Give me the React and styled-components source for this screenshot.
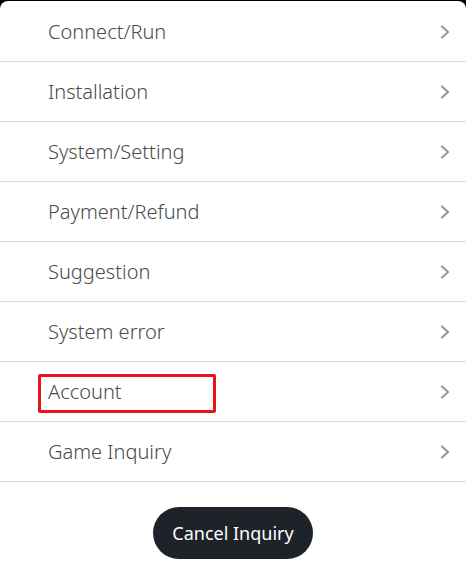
import React from 'react';
import styled, { createGlobalStyle } from 'styled-components';

const GlobalStyle = createGlobalStyle`
  html, body {
    margin: 0;
    padding: 0;
    background: #000;
  }
  body {
    font-family: "Noto Sans", "Open Sans", sans-serif;
  }
`;

const topics = [
  'Connect/Run',
  'Installation',
  'System/Setting',
  'Payment/Refund',
  'Suggestion',
  'System error',
  'Account',
  'Game Inquiry',
];

function Chevron() {
  return (
    <svg width="12" height="14" viewBox="0 0 12 14" fill="none">
      <path d="M3 1.5 L9 7 L3 12.5" stroke="#9a9a9a" strokeWidth="2.2" strokeLinecap="round" strokeLinejoin="round" />
    </svg>
  );
}

export default function App() {
  return (
    <>
      <GlobalStyle />
      <Sheet>
        <List>
          {topics.map((t) => (
            <Row key={t}>
              <Label>{t}</Label>
              {t === 'Account' && <Highlight />}
              <Chevron />
            </Row>
          ))}
        </List>
        <Footer>
          <CancelButton>Cancel Inquiry</CancelButton>
        </Footer>
      </Sheet>
    </>
  );
}

const Sheet = styled.div`
  margin-top: 1px;
  height: 582px;
  background: #fff;
  border-radius: 8px 8px 0 0;
  display: flex;
  flex-direction: column;
`;

const List = styled.ul`
  list-style: none;
  margin: 0;
  padding: 1px 0 0;
`;

const Row = styled.li`
  position: relative;
  height: 59px;
  border-bottom: 1px solid #dcdcdc;
  display: flex;
  align-items: center;
  justify-content: space-between;
  padding: 0 15px 0 48px;
`;

const Label = styled.span`
  font-size: 20px;
  font-weight: 300;
  color: #4a4a4a;
`;

const Highlight = styled.div`
  position: absolute;
  left: 38px;
  top: 12px;
  width: 172px;
  height: 33px;
  border: 3px solid #e8141b;
  border-radius: 2px;
`;

const Footer = styled.div`
  display: flex;
  justify-content: center;
  padding-top: 25px;
`;

const CancelButton = styled.button`
  width: 160px;
  height: 52px;
  border: none;
  border-radius: 26px;
  background: #1e2229;
  color: #fff;
  font-family: "Noto Sans", "Open Sans", sans-serif;
  font-size: 18px;
  cursor: pointer;
`;
